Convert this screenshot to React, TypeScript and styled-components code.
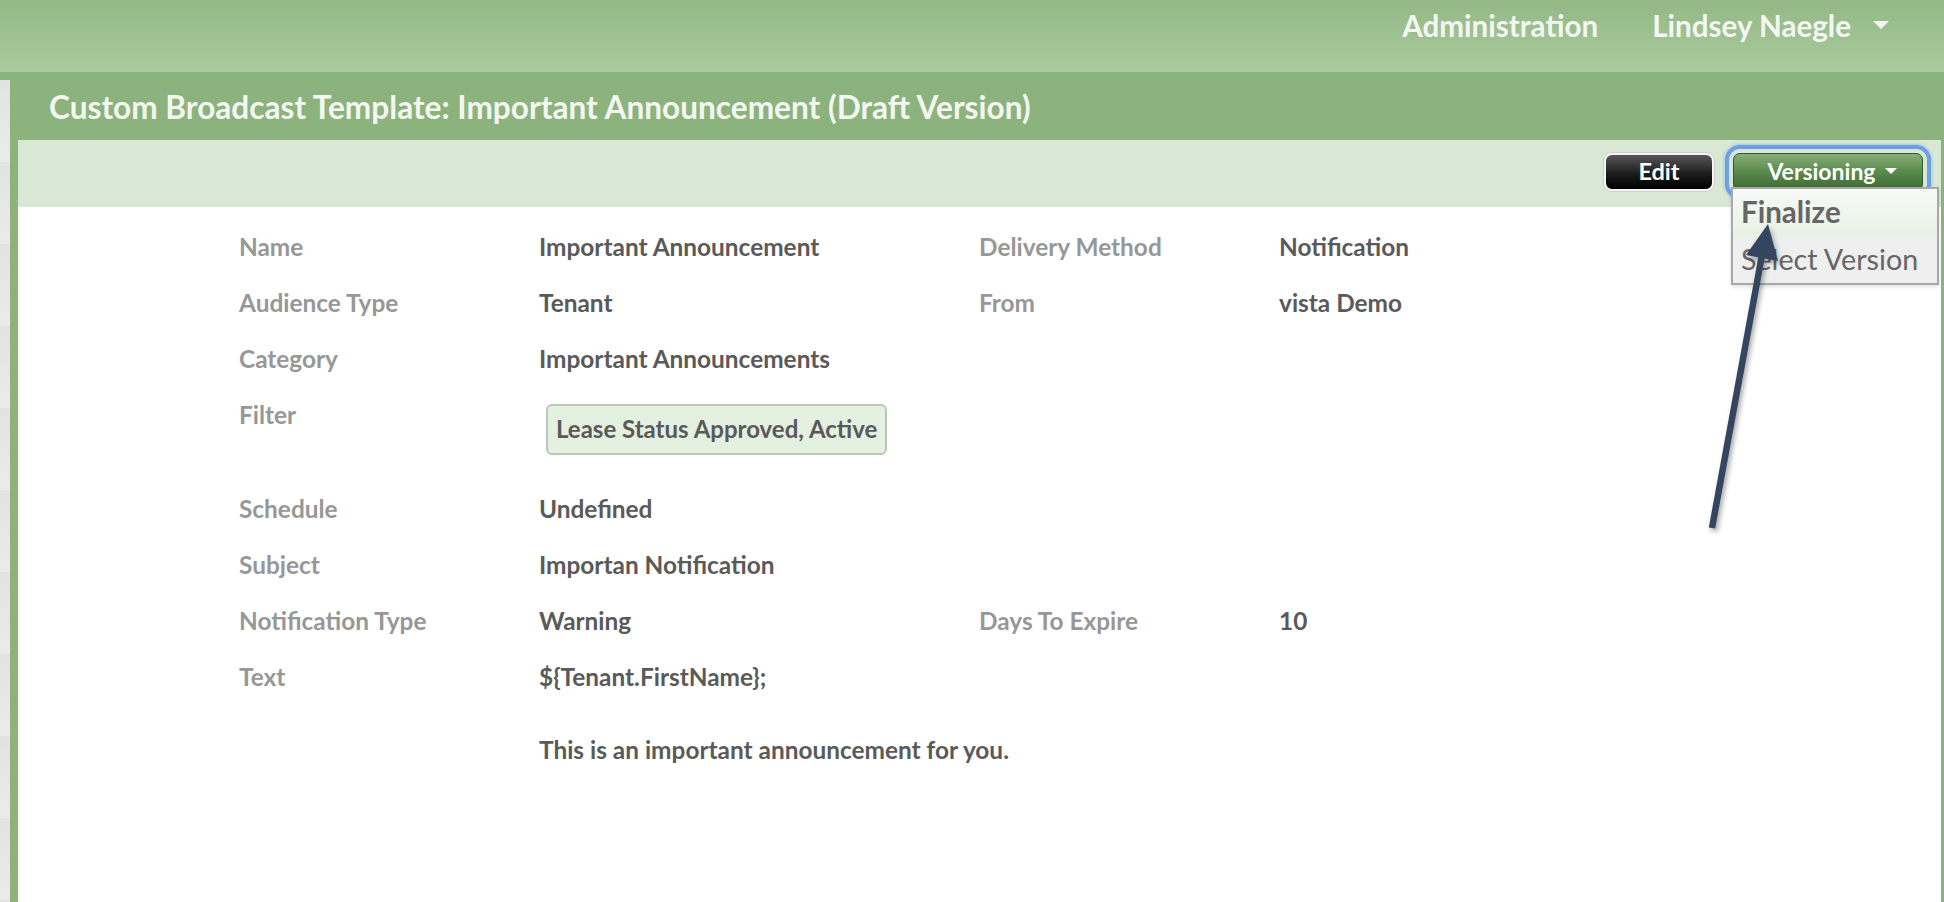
import React from "react";
import styled, { createGlobalStyle } from "styled-components";

const GlobalStyle = createGlobalStyle`
  html, body { margin: 0; padding: 0; background: #ffffff; }
  body { font-family: Lato, "Open Sans", Arial, sans-serif; width: 1944px; height: 902px; overflow: hidden; }
  * { box-sizing: border-box; }
`;

const Page = styled.div`
  position: relative;
  width: 1944px;
  height: 902px;
  overflow: hidden;
  display: flex;
  flex-direction: column;
`;

const Header = styled.header`
  height: 72px;
  flex: none;
  background: linear-gradient(#93b885, #aacb9e);
  display: flex;
  align-items: center;
  justify-content: flex-end;
  padding: 0 55px 22px 0;
  gap: 54px;
`;

const NavItem = styled.div`
  color: #f4f7f1;
  font-weight: 700;
  font-size: 29.6px;
  display: flex;
  align-items: center;
  gap: 22px;
`;

const Caret = styled.span<{ $size: number; $color: string }>`
  display: inline-block;
  width: 0;
  height: 0;
  border-left: ${(p) => p.$size}px solid transparent;
  border-right: ${(p) => p.$size}px solid transparent;
  border-top: ${(p) => p.$size}px solid ${(p) => p.$color};
`;

const Body = styled.div`
  flex: 1;
  display: flex;
  min-height: 0;
`;

const Sidebar = styled.div`
  width: 10px;
  flex: none;
  border-top: 8px solid #8cb37d;
  display: flex;
  flex-direction: column;
`;

const Strip = styled.div`
  height: 82px;
  flex: none;
  background: linear-gradient(#e2e2e2, #ebebeb);
`;

const Panel = styled.main`
  flex: 1;
  display: flex;
  flex-direction: column;
  border-left: 8px solid #8cb37d;
  border-right: 4px solid #8cb37d;
  margin-right: -1px;
`;

const TitleBar = styled.div`
  height: 68px;
  flex: none;
  background: #8cb37d;
  margin-left: -8px;
  padding-left: 39px;
  display: flex;
  align-items: center;
  padding-top: 1px;
`;

const Title = styled.h1`
  margin: 0;
  color: #f4f7f1;
  font-size: 31.6px;
  font-weight: 700;
`;

const Toolbar = styled.div`
  height: 67px;
  flex: none;
  background: #d9e8d5;
  display: flex;
  justify-content: flex-end;
  align-items: flex-start;
  padding: 13px 18px 0 0;
  gap: 19px;
`;

const EditButton = styled.button`
  width: 110px;
  height: 38px;
  border-radius: 8px;
  border: 2px solid #f4f4f4;
  box-shadow: 0 0 0 1px #cfcfcf;
  background: linear-gradient(#585858, #1c1c1c 55%, #000);
  color: #ffffff;
  font-family: inherit;
  font-weight: 700;
  font-size: 23.5px;
  padding: 0 0 2px;
  cursor: pointer;
`;

const MenuWrap = styled.div`
  position: relative;
`;

const VersionButton = styled.button`
  width: 190px;
  height: 38px;
  border-radius: 7px;
  border: 1px solid #355a2c;
  background: linear-gradient(#86ad79, #5a8a4c 50%, #3c6832);
  color: #ffffff;
  font-family: inherit;
  font-weight: 700;
  font-size: 23px;
  display: flex;
  align-items: center;
  justify-content: center;
  gap: 9px;
  padding: 0 0 3px 8px;
  box-shadow: 0 0 0 4px #d9e8d5, 0 0 0 8px #6c9fe6, 0 0 3px 9px rgba(108, 159, 230, 0.45);
  cursor: pointer;
`;

const Menu = styled.div`
  position: absolute;
  top: 34px;
  left: -2px;
  width: 208px;
  border: 2px solid #a8a8a8;
  background: #efefef;
  box-shadow: 0 2px 4px rgba(0, 0, 0, 0.12);
  z-index: 2;
`;

const MenuItem = styled.div<{ $active?: boolean }>`
  height: ${(p) => (p.$active ? 48 : 46)}px;
  display: flex;
  align-items: center;
  padding: 0 0 ${(p) => (p.$active ? 3 : 2)}px 8px;
  color: #666666;
  font-size: ${(p) => (p.$active ? 29.5 : 28.7)}px;
  font-weight: ${(p) => (p.$active ? 700 : 400)};
  background: ${(p) => (p.$active ? "linear-gradient(#f7faf6, #e8f1e6)" : "#efefef")};
  white-space: nowrap;
`;

const Content = styled.section`
  padding: 12px 0 0 221px;
`;

const Row = styled.div<{ $height?: number }>`
  display: grid;
  grid-template-columns: 300px 440px 300px 1fr;
  min-height: ${(p) => p.$height ?? 56}px;
  align-items: start;
  padding-top: 14px;
  line-height: 28px;
  font-size: 24.4px;
  font-weight: 700;
`;

const Label = styled.div`
  color: #979797;
`;

const Value = styled.div<{ $wide?: boolean }>`
  color: #5a5a5a;
  white-space: nowrap;
  grid-column: ${(p) => (p.$wide ? "2 / span 3" : "auto")};
`;

const Para = styled.p<{ $gap?: number }>`
  margin: ${(p) => p.$gap ?? 0}px 0 0;
`;

const Pill = styled.span`
  display: inline-block;
  margin: 3px 0 0 7px;
  padding: 9px 8px 10px 8px;
  border: 2px solid #bac6b6;
  border-radius: 6px;
  background: #e4f0e0;
  color: #5a5a5a;
  font-size: 24px;
  white-space: nowrap;
`;

const Overlay = styled.svg`
  position: absolute;
  left: 0;
  top: 0;
  width: 1944px;
  height: 902px;
  pointer-events: none;
  z-index: 5;
`;

type Field = {
  label: string;
  value: React.ReactNode;
  label2?: string;
  value2?: string;
  height?: number;
  wide?: boolean;
};

const fields: Field[] = [
  { label: "Name", value: "Important Announcement", label2: "Delivery Method", value2: "Notification" },
  { label: "Audience Type", value: "Tenant", label2: "From", value2: "vista Demo" },
  { label: "Category", value: "Important Announcements" },
  { label: "Filter", value: <Pill>Lease Status Approved, Active</Pill>, height: 94 },
  { label: "Schedule", value: "Undefined" },
  { label: "Subject", value: "Importan Notification" },
  { label: "Notification Type", value: "Warning", label2: "Days To Expire", value2: "10" },
  {
    label: "Text",
    wide: true,
    value: (
      <>
        <Para>{"${Tenant.FirstName};"}</Para>
        <Para $gap={45}>This is an important announcement for you.</Para>
      </>
    ),
  },
];

export default function App() {
  return (
    <>
      <GlobalStyle />
      <Page>
        <Header>
          <NavItem>Administration</NavItem>
          <NavItem>
            Lindsey Naegle
            <Caret $size={8} $color="#f4f7f1" />
          </NavItem>
        </Header>
        <Body>
          <Sidebar>
            {Array.from({ length: 11 }).map((_, i) => (
              <Strip key={i} />
            ))}
          </Sidebar>
          <Panel>
            <TitleBar>
              <Title>Custom Broadcast Template: Important Announcement (Draft Version)</Title>
            </TitleBar>
            <Toolbar>
              <EditButton>Edit</EditButton>
              <MenuWrap>
                <VersionButton>
                  Versioning
                  <Caret $size={6} $color="#ffffff" />
                </VersionButton>
                <Menu>
                  <MenuItem $active>Finalize</MenuItem>
                  <MenuItem>Select Version</MenuItem>
                </Menu>
              </MenuWrap>
            </Toolbar>
            <Content>
              {fields.map((f) => (
                <Row key={f.label} $height={f.height}>
                  <Label>{f.label}</Label>
                  <Value $wide={f.wide}>{f.value}</Value>
                  {!f.wide && (
                    <>
                      <Label>{f.label2 ?? ""}</Label>
                      <Value>{f.value2 ?? ""}</Value>
                    </>
                  )}
                </Row>
              ))}
            </Content>
          </Panel>
        </Body>
        <Overlay viewBox="0 0 1944 902">
          <defs>
            <filter id="arrowShadow" x="-50%" y="-10%" width="200%" height="120%">
              <feDropShadow dx="2" dy="3" stdDeviation="2.5" floodColor="#000" floodOpacity="0.35" />
            </filter>
          </defs>
          <g filter="url(#arrowShadow)" fill="#36455e" stroke="none">
            <line x1="1712" y1="528" x2="1762" y2="255" stroke="#36455e" strokeWidth="6.5" />
            <polygon points="1768,224 1778,261 1746,255" />
          </g>
        </Overlay>
      </Page>
    </>
  );
}
